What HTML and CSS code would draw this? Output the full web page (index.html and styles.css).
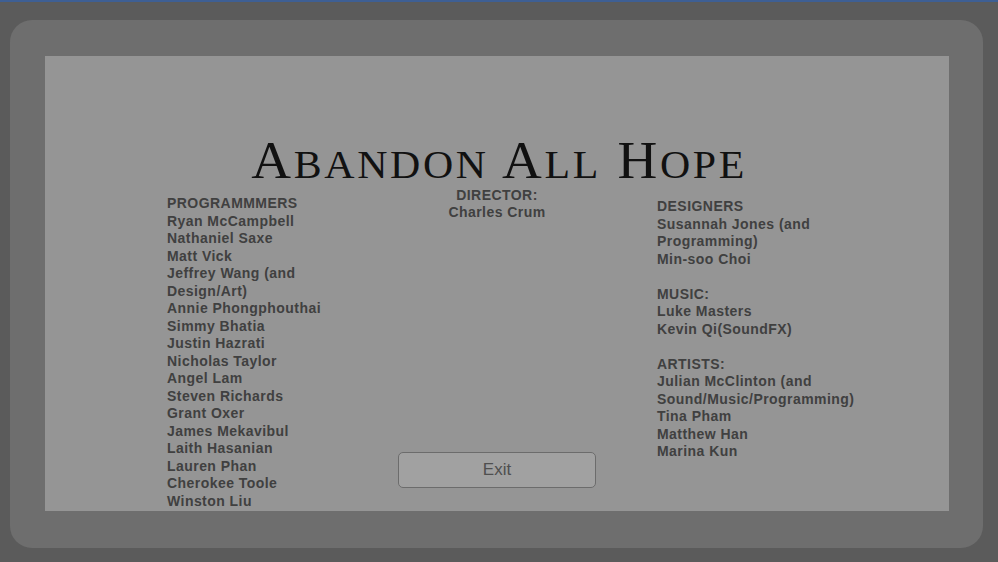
FILE: index.html
```html
<!DOCTYPE html>
<html>
<head>
<meta charset="utf-8">
<link rel="stylesheet" href="styles.css">
</head>
<body>
<div class="screen">
  <div class="frame">
    <div class="panel">
      <h1 class="title">A<span class="sc">bandon</span> A<span class="sc">ll</span> H<span class="sc">ope</span></h1>
      <div class="cols">
        <div class="col col-prog">
          <div>PROGRAMMMERS</div>
          <div>Ryan McCampbell</div>
          <div>Nathaniel Saxe</div>
          <div>Matt Vick</div>
          <div>Jeffrey Wang (and<br>Design/Art)</div>
          <div>Annie Phongphouthai</div>
          <div>Simmy Bhatia</div>
          <div>Justin Hazrati</div>
          <div>Nicholas Taylor</div>
          <div>Angel Lam</div>
          <div>Steven Richards</div>
          <div>Grant Oxer</div>
          <div>James Mekavibul</div>
          <div>Laith Hasanian</div>
          <div>Lauren Phan</div>
          <div>Cherokee Toole</div>
          <div>Winston Liu</div>
        </div>
        <div class="col col-dir">
          <div>DIRECTOR:</div>
          <div>Charles Crum</div>
          <button class="exit">Exit</button>
        </div>
        <div class="col col-right">
          <div class="group">
            <div>DESIGNERS</div>
            <div>Susannah Jones (and<br>Programming)</div>
            <div>Min-soo Choi</div>
          </div>
          <div class="group">
            <div>MUSIC:</div>
            <div>Luke Masters</div>
            <div>Kevin Qi(SoundFX)</div>
          </div>
          <div class="group">
            <div>ARTISTS:</div>
            <div>Julian McClinton (and<br>Sound/Music/Programming)</div>
            <div>Tina Pham</div>
            <div>Matthew Han</div>
            <div>Marina Kun</div>
          </div>
        </div>
      </div>
    </div>
  </div>
</div>
</body>
</html>
```

FILE: styles.css
```css
* { box-sizing: border-box; }
html, body {
  margin: 0;
  padding: 0;
  width: 998px;
  height: 562px;
  overflow: hidden;
}
body {
  background: #5b5b5b;
  font-family: "Liberation Sans", Arial, sans-serif;
}
.screen {
  height: 562px;
  border-top: 2px solid #3e5f94;
  padding: 18px 15px 14px 10px;
  display: flex;
}
.frame {
  flex: 1;
  background: #6e6e6e;
  border-radius: 22px;
  padding: 36px 34px 37px 35px;
  display: flex;
}
.panel {
  flex: 1;
  background: #959595;
  padding-top: 78px;
  display: flex;
  flex-direction: column;
}
.title {
  margin: 0;
  font-family: "Liberation Serif", "Times New Roman", serif;
  font-weight: normal;
  font-size: 52px;
  line-height: 54px;
  height: 54px;
  color: #111;
  text-align: center;
  letter-spacing: 2.5px;
  padding-left: 4px;
  transform: scaleX(1.06);
}
.title .sc {
  text-transform: uppercase;
  font-size: 0.76em;
}
.cols {
  flex: 1;
  display: grid;
  grid-template-columns: 200px 260px 1fr;
  padding-left: 122px;
  font-size: 14px;
  line-height: 17.5px;
  font-weight: bold;
  letter-spacing: 0.45px;
  color: #404040;
}
.col-prog { margin-top: 7px; }
.col-dir {
  margin-top: -1.5px;
  text-align: center;
  display: flex;
  flex-direction: column;
  align-items: center;
}
.col-right {
  margin-top: 10px;
  padding-left: 30px;
  display: flex;
  flex-direction: column;
  gap: 17.5px;
}
.exit {
  margin-top: auto;
  margin-bottom: 23px;
  width: 198px;
  height: 36px;
  background: #a1a1a1;
  border: 1px solid #6c6c6c;
  border-radius: 5px;
  font-family: "Liberation Sans", Arial, sans-serif;
  font-size: 17px;
  color: #4f4f4f;
  font-weight: normal;
  padding: 0;
}
```
